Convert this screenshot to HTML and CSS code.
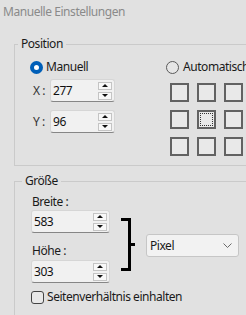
FILE: index.html
```html
<!DOCTYPE html>
<html>
<head>
    <title>Manuelle Einstellungen</title>
    <link rel="stylesheet" href="styles.css">
</head>
<body>
    <div class="title">Manuelle Einstellungen</div>

    <fieldset class="group group-pos">
        <legend>Position</legend>
        <div class="pos-row">
            <div class="pos-manual">
                <label class="radio-row">
                    <span class="radio checked"></span>Manuell
                </label>
                <div class="coord coord-x">
                    <span class="coord-label">X :</span>
                    <div class="spin spin-small">
                        <span class="spin-value">277</span>
                        <div class="spin-btns">
                            <span class="spin-btn"><i class="tri-up"></i></span>
                            <span class="spin-btn"><i class="tri-down"></i></span>
                        </div>
                    </div>
                </div>
                <div class="coord coord-y">
                    <span class="coord-label">Y :</span>
                    <div class="spin spin-small">
                        <span class="spin-value">96</span>
                        <div class="spin-btns">
                            <span class="spin-btn"><i class="tri-up"></i></span>
                            <span class="spin-btn"><i class="tri-down"></i></span>
                        </div>
                    </div>
                </div>
            </div>
            <div class="pos-auto">
                <label class="radio-row">
                    <span class="radio"></span>Automatisch
                </label>
                <div class="anchor-grid">
                    <span class="cell"></span>
                    <span class="cell"></span>
                    <span class="cell"></span>
                    <span class="cell"></span>
                    <span class="cell focus"><i></i></span>
                    <span class="cell"></span>
                    <span class="cell"></span>
                    <span class="cell"></span>
                    <span class="cell"></span>
                </div>
            </div>
        </div>
    </fieldset>

    <fieldset class="group group-size">
        <legend>Größe</legend>
        <div class="size-row">
            <div class="size-fields">
                <div class="field-label">Breite :</div>
                <div class="spin spin-wide">
                    <span class="spin-value">583</span>
                    <div class="spin-btns">
                        <span class="spin-btn"><i class="tri-up"></i></span>
                        <span class="spin-btn"><i class="tri-down"></i></span>
                    </div>
                </div>
                <div class="field-label label-height">Höhe :</div>
                <div class="spin spin-wide">
                    <span class="spin-value">303</span>
                    <div class="spin-btns">
                        <span class="spin-btn"><i class="tri-up"></i></span>
                        <span class="spin-btn"><i class="tri-down"></i></span>
                    </div>
                </div>
            </div>
            <div class="bracket-wrap">
                <div class="bracket"></div>
                <div class="bracket-tick"></div>
            </div>
            <div class="unit-select">
                <span>Pixel</span>
                <svg width="9" height="6" viewBox="0 0 9 6"><path d="M0.5 0.5 L4.5 4.5 L8.5 0.5" fill="none" stroke="#6a6a6a" stroke-width="1"/></svg>
            </div>
        </div>
        <label class="check-row">
            <span class="checkbox"></span>Seitenverhältnis einhalten
        </label>
    </fieldset>
</body>
</html>
```

FILE: styles.css
```css
body {
    margin: 0;
    width: 246px;
    height: 315px;
    overflow: hidden;
    background-color: #e1e1e1;
    font-family: "Noto Sans", Arial, sans-serif;
    font-size: 12px;
    line-height: 16px;
    letter-spacing: -0.45px;
    color: #1a1a1a;
}

.title {
    height: 22px;
    padding: 4px 0 0 3px;
    box-sizing: border-box;
    color: #8a8a8a;
}

/* group boxes */
.group {
    width: 260px;
    margin: 0 0 0 14px;
    border: 1px solid #cacaca;
    box-sizing: border-box;
}

.group legend {
    padding: 0 3px;
}

.group-pos {
    margin-top: 14px;
    padding: 7px 0 9px 15px;
}

.group-pos legend {
    margin-left: -12px;
}

.group-size {
    margin-top: 7px;
    height: 150px;
    padding: 5px 0 0 16px;
}

.group-size legend {
    margin-left: -9px;
}

/* position */
.pos-row {
    display: flex;
}

.pos-manual {
    width: 136px;
}

.radio-row {
    display: flex;
    align-items: center;
    height: 16px;
    white-space: nowrap;
}

.radio {
    width: 13px;
    height: 13px;
    box-sizing: border-box;
    border: 1px solid #5a5a5a;
    border-radius: 50%;
    background-color: #e6e6e6;
    margin-right: 3px;
}

.radio.checked {
    border: 4px solid #005fb8;
    background-color: #fff;
}

.coord {
    display: flex;
    align-items: center;
}

.coord-x {
    margin-top: 4px;
}

.coord-y {
    margin-top: 8px;
}

.coord-label {
    width: 20px;
    padding-left: 3px;
    box-sizing: border-box;
    color: #333;
}

/* spin boxes */
.spin {
    display: flex;
    align-items: center;
    justify-content: space-between;
    height: 23px;
    box-sizing: border-box;
    background-color: #f1f1f1;
    border: 1px solid #d6d6d6;
    border-bottom-color: #868686;
    border-radius: 3px;
    padding: 0 2px 0 2px;
}

.spin-small {
    width: 65px;
}

.spin-wide {
    width: 79px;
}

.spin-value {
    color: #111;
}

.spin-btns {
    display: flex;
    flex-direction: column;
    gap: 2px;
}

.spin-btn {
    display: flex;
    align-items: center;
    justify-content: center;
    width: 14px;
    height: 8px;
    box-sizing: border-box;
    border: 1px solid #c4c4c4;
    background-color: #f8f8f8;
}

.tri-up {
    border-left: 3px solid transparent;
    border-right: 3px solid transparent;
    border-bottom: 3px solid #111;
}

.tri-down {
    border-left: 3px solid transparent;
    border-right: 3px solid transparent;
    border-top: 3px solid #111;
}

/* anchor grid */
.pos-auto .radio {
    margin-right: 4px;
}

.anchor-grid {
    display: grid;
    grid-template-columns: repeat(3, 19px);
    grid-auto-rows: 19px;
    gap: 8px;
    margin: 8px 0 0 4px;
}

.cell {
    display: flex;
    align-items: center;
    justify-content: center;
    box-sizing: border-box;
    border: 2px solid #626262;
    background-color: #e9e9e9;
}

.cell.focus i {
    width: 13px;
    height: 13px;
    box-sizing: border-box;
    border: 1px dotted #333;
}

/* size */
.size-row {
    display: flex;
    align-items: flex-start;
}

.size-fields {
    width: 79px;
}

.field-label {
    padding-left: 1px;
}

.label-height {
    margin-top: 10px;
    margin-bottom: 1px;
}

.bracket-wrap {
    display: flex;
    align-items: center;
    margin: 24px 0 0 11px;
}

.bracket {
    width: 10px;
    height: 53px;
    box-sizing: border-box;
    border: 3px solid #000;
    border-left: none;
}

.bracket-tick {
    width: 4px;
    height: 3px;
    background-color: #000;
}

.unit-select {
    display: flex;
    align-items: center;
    justify-content: space-between;
    width: 93px;
    height: 23px;
    box-sizing: border-box;
    margin: 40px 0 0 11px;
    padding: 0 6px 0 3px;
    background-color: #f2f2f2;
    border: 1px solid #c6c6c6;
    border-radius: 3px;
}

.check-row {
    display: flex;
    align-items: center;
    height: 16px;
    margin-top: 6px;
}

.checkbox {
    width: 13px;
    height: 13px;
    box-sizing: border-box;
    border: 1px solid #444;
    border-radius: 3px;
    background-color: #e9e9e9;
    margin-right: 3px;
}
```
